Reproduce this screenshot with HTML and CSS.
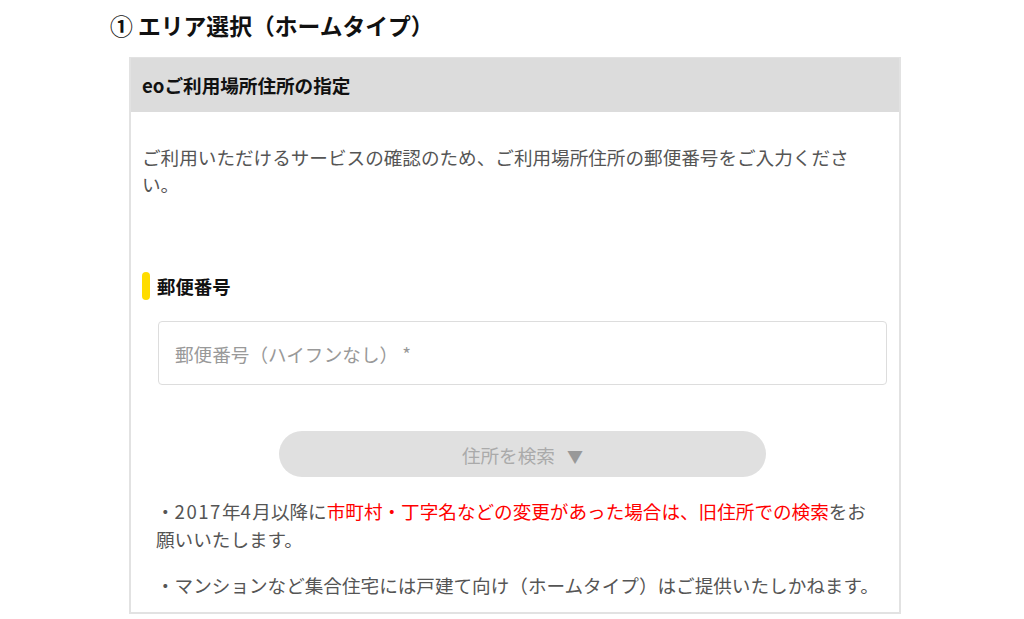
FILE: index.html
```html
<!DOCTYPE html>
<html lang="ja">
 <head>
  <meta charset="utf-8">
  <title>エリア選択</title>
  <link rel="stylesheet" href="styles.css">
 </head>
 <body>

  <div class="page">
    <h2 class="step-title">① エリア選択（ホームタイプ）</h2>

    <div class="card">
      <div class="card-head">eoご利用場所住所の指定</div>
      <div class="card-body">
        <p class="lead">ご利用いただけるサービスの確認のため、ご利用場所住所の郵便番号をご入力ください。</p>

        <div class="label">郵便番号</div>

        <div class="field">
          <input type="text" class="zip" placeholder="郵便番号（ハイフンなし） *">
          <button class="btn-search" disabled>住所を検索 <span class="arrow">▼</span></button>
        </div>

        <div class="notes">
          <p>・<span class="num">2017</span>年<span class="num">4</span>月以降に<span class="red">市町村・丁字名などの変更があった場合は、旧住所での検索</span>をお願いいたします。</p>
          <p>・マンションなど集合住宅には戸建て向け（ホームタイプ）はご提供いたしかねます。</p>
        </div>
      </div>
    </div><!-- card -->
  </div>

 </body>
</html>
```

FILE: styles.css
```css
*{box-sizing:border-box;margin:0;padding:0}
html{background:#fff}
body{font-family:"Noto Sans CJK JP","Noto Sans",sans-serif;color:#555}
.page{margin-left:110px;width:791px;padding-top:9px}
.step-title{font-size:22.8px;line-height:34px;font-weight:bold;color:#111;margin-bottom:14px}
.card{margin-left:19px;border:2px solid #e2e2e2;border-top-width:1px}
.card-head{background:#dcdcdc;height:54px;line-height:54px;padding-left:11px;font-size:18.6px;font-weight:bold;color:#111}
.card-body{padding:31px 13px 13px 11px}
.lead{font-size:18.6px;line-height:27px;padding-right:2px}
.label{margin-top:75px;position:relative;padding-left:15px;font-size:18.4px;font-weight:bold;color:#111;line-height:28px}
.label::before{content:"";position:absolute;left:0;top:0;width:8px;height:28px;border-radius:4px;background:#ffdc00}
.field{margin:21px -1px 0 16px;display:flex;flex-flow:column}
.zip{height:64px;border:1px solid #ddd;border-radius:4px;padding:0 16px;font-family:inherit;font-size:18.6px;color:#555;outline:none}
.zip::placeholder{color:#999}
.btn-search{margin:46px auto 0;width:487px;height:46px;border:0;border-radius:23px;background:#e0e0e0;color:#aaa;font-family:inherit;font-size:18.6px}
.arrow{font-size:16px;margin-left:8px;color:#999}
.notes{margin:20px 0 0 14px;width:727px}
.notes p{font-size:18.6px;line-height:28px}
.notes p + p{margin-top:18px}
.num{letter-spacing:1.5px}
.red{color:#f00}
```
